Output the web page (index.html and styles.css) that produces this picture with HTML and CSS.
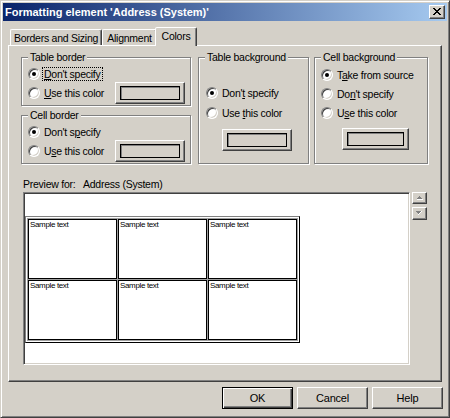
FILE: index.html
```html
<!DOCTYPE html>
<html>
<head>
<meta charset="utf-8">
<title>Formatting element</title>
<link rel="stylesheet" href="styles.css">
</head>
<body>
<div class="window">
  <div class="titlebar">
    <span class="title">Formatting element 'Address (System)'</span>
    <span class="close"><svg width="8" height="7" viewBox="0 0 8 7" shape-rendering="crispEdges"><path d="M0 0h2v1H0z M6 0h2v1H6z M1 1h2v1H1z M5 1h2v1H5z M2 2h4v1H2z M3 3h2v1H3z M2 4h4v1H2z M1 5h2v1H1z M5 5h2v1H5z M0 6h2v1H0z M6 6h2v1H6z" fill="#000"/></svg></span>
  </div>
  <div class="client">
    <div class="tabs">
      <div class="tab t1">Borders and Sizing</div>
      <div class="tab t2">Alignment</div>
      <div class="tab t3 sel">Colors</div>
    </div>
    <div class="panel">
      <div class="groups">
        <div class="stack">
          <div class="grp small">
            <div class="legend">Table border</div>
            <div class="opts">
              <div class="opt"><span class="radio on"></span><span class="focus"><u>D</u>on't specify</span></div>
              <div class="opt"><span class="radio"></span><span><u>U</u>se this color</span><span class="cbtn push"><span class="swatch"></span></span></div>
            </div>
          </div>
          <div class="grp small second">
            <div class="legend">Cell border</div>
            <div class="opts">
              <div class="opt"><span class="radio on"></span><span>Don't s<u>p</u>ecify</span></div>
              <div class="opt"><span class="radio"></span><span>U<u>s</u>e this color</span><span class="cbtn push"><span class="swatch"></span></span></div>
            </div>
          </div>
        </div>
        <div class="grp tall tbg">
          <div class="legend">Table background</div>
          <div class="opts">
            <div class="opt"><span class="radio on"></span><span>Don'<u>t</u> specify</span></div>
            <div class="opt"><span class="radio"></span><span>Use <u>t</u>his color</span></div>
            <span class="cbtn below"><span class="swatch"></span></span>
          </div>
        </div>
        <div class="grp tall cbg">
          <div class="legend">Cell background</div>
          <div class="opts">
            <div class="opt"><span class="radio on"></span><span>T<u>a</u>ke from source</span></div>
            <div class="opt"><span class="radio"></span><span>Do<u>n</u>'t specify</span></div>
            <div class="opt"><span class="radio"></span><span>U<u>s</u>e this color</span></div>
            <span class="cbtn below narrow"><span class="swatch"></span></span>
          </div>
        </div>
      </div>
      <div class="plabel"><span class="k">Preview for:</span><span>Address (System)</span></div>
      <div class="prow">
        <div class="preview">
          <div class="ptable">
            <div class="cell">Sample text</div>
            <div class="cell">Sample text</div>
            <div class="cell">Sample text</div>
            <div class="cell">Sample text</div>
            <div class="cell">Sample text</div>
            <div class="cell">Sample text</div>
          </div>
        </div>
        <div class="spin">
          <span class="sbtn up"><svg width="7" height="4" viewBox="0 0 7 4" shape-rendering="crispEdges"><path d="M3 0h1v1h1v1h1v1H1V2h1V1h1z" fill="#808080"/><path d="M1 3h6v1H1z" fill="#fff"/></svg></span>
          <span class="sbtn down"><svg width="7" height="4" viewBox="0 0 7 4" shape-rendering="crispEdges"><path d="M0 0h5v1H4v1H3v1H2V2H1V1H0z" fill="#808080"/><path d="M5 0h1v1H5zM4 1h1v1H4zM3 2h1v1H3zM2 3h1v1H2z" fill="#fff"/></svg></span>
        </div>
      </div>
    </div>
    <div class="btns">
      <span class="btn def">OK</span>
      <span class="btn">Cancel</span>
      <span class="btn">Help</span>
    </div>
  </div>
</div>
</body>
</html>
```
FILE: styles.css
```css
* { box-sizing: border-box; }
html, body { margin: 0; padding: 0; }
body {
  background: #d4d0c8;
  font-family: "Liberation Sans", Arial, sans-serif;
  font-size: 10.5px;
  letter-spacing: -0.25px;
  color: #000;
}
u { text-decoration: underline; text-underline-offset: 1px; }

.window {
  width: 450px;
  height: 418px;
  border: 1px solid;
  border-color: #d4d0c8 #404040 #404040 #d4d0c8;
  box-shadow: inset 1px 1px 0 #fff, inset -1px -1px 0 #808080;
  padding: 2px;
  display: flex;
  flex-direction: column;
}

.titlebar {
  height: 18px;
  flex: none;
  display: flex;
  align-items: center;
  justify-content: space-between;
  padding: 0 2px 0 2px;
  background: linear-gradient(90deg, #0a246a 0%, #a6caf0 100%);
}
.title {
  color: #fff;
  font-weight: bold;
  font-size: 11px;
  letter-spacing: 0;
  line-height: 13px;
}
.close {
  width: 16px;
  height: 14px;
  background: #d4d0c8;
  border: 1px solid;
  border-color: #fff #404040 #404040 #fff;
  box-shadow: inset -1px -1px 0 #808080;
  display: flex;
  align-items: center;
  justify-content: center;
  padding: 0 1px 1px 0;
}
.close svg { display: block; }

.client {
  flex: 1;
  padding: 6px 5px 0 5px;
  display: flex;
  flex-direction: column;
}

.tabs {
  height: 18px;
  display: flex;
  align-items: flex-end;
  padding-left: 2px;
}
.tab {
  height: 16px;
  border: 1px solid;
  border-bottom: 0;
  border-color: #fff #404040 transparent #fff;
  box-shadow: inset -1px 0 0 #808080;
  border-radius: 2px 2px 0 0;
  display: flex;
  align-items: center;
  justify-content: center;
  padding-top: 1px;
}
.t1 { width: 92px; }
.t2 { width: 55px; }
.t3 { width: 42px; }
.tab.sel {
  height: 19px;
  margin: 0 -2px -1px -2px;
  position: relative;
  z-index: 1;
  background: #d4d0c8;
  padding-top: 0;
  padding-bottom: 3px;
}

.panel {
  height: 337px;
  border: 1px solid;
  border-color: #fff #404040 #404040 #fff;
  box-shadow: inset -1px -1px 0 #808080;
  padding: 5px 12px 0 12px;
}

.groups { display: flex; align-items: flex-start; }
.stack { width: 170px; display: flex; flex-direction: column; }
.grp {
  margin-top: 6px;
  border: 1px solid #808080;
  box-shadow: inset 1px 1px 0 #fff, 1px 1px 0 #fff;
}
.grp.small { height: 49px; }
.grp.small.second { margin-top: 9px; }
.grp.tall { height: 107px; }
.tbg { width: 111px; margin-left: 7px; }
.cbg { width: 114px; margin-left: 5px; }

.legend {
  display: block;
  width: fit-content;
  height: 12px;
  line-height: 12px;
  margin: -7px 0 0 6px;
  padding: 0 2px;
  background: #d4d0c8;
  white-space: nowrap;
}

.opts { display: flex; flex-direction: column; }
.small .opts { padding: 2px 5px 0 6px; gap: 1px; }
.tbg .opts { padding: 21px 0 0 7px; gap: 2px; }
.cbg .opts { padding: 3px 0 0 6px; gap: 1px; }

.opt {
  display: flex;
  align-items: center;
  height: 18px;
  white-space: nowrap;
}
.radio {
  flex: none;
  width: 12px;
  height: 12px;
  margin-right: 4px;
  border-radius: 50%;
  background: #fff;
  border: 1px solid;
  border-color: #808080 #fff #fff #808080;
  box-shadow: inset 1px 1px 0 #404040, inset -1px -1px 0 #d4d0c8;
  display: flex;
  align-items: center;
  justify-content: center;
}
.radio.on::after {
  content: "";
  width: 4px;
  height: 4px;
  border-radius: 50%;
  background: #000;
}
.focus {
  display: inline-block;
  line-height: 12px;
  border: 1px dotted #000;
  padding: 0 1px;
  margin-left: -2px;
}

.cbtn {
  flex: none;
  width: 70px;
  height: 22px;
  border: 1px solid;
  border-color: #fff #404040 #404040 #fff;
  box-shadow: inset -1px -1px 0 #808080;
  display: flex;
  align-items: center;
  justify-content: center;
  padding: 0 1px 1px 0;
}
.cbtn.push { margin-left: auto; }
.cbtn.below { margin-top: 5px; }
.tbg .cbtn.below { margin-left: 16px; }
.cbg .cbtn.below { margin-left: 21px; }
.cbtn.narrow { width: 67px; }
.swatch {
  width: 60px;
  height: 14px;
  border: 1px solid #000;
  box-shadow: inset 1px 1px 0 #808080;
  background: #d4d0c8;
}
.narrow .swatch { width: 57px; }

.plabel {
  margin: 14px 0 2px 2px;
  height: 12px;
  line-height: 12px;
  white-space: nowrap;
}
.plabel .k { display: inline-block; width: 60px; }

.prow { display: flex; align-items: flex-start; margin-left: 2px; }
.preview {
  width: 387px;
  height: 173px;
  background: #fff;
  border: 1px solid;
  border-color: #808080 #fff #fff #808080;
  box-shadow: inset 1px 1px 0 #404040, inset -1px -1px 0 #d4d0c8;
  padding: 23px 0 0 1px;
}
.ptable {
  width: fit-content;
  display: grid;
  grid-template-columns: repeat(3, 89px);
  grid-template-rows: 60px 60px;
  gap: 1px;
  padding: 2px;
  border: 1px solid;
  border-color: #808080 #000 #000 #808080;
  background: #fff;
}
.cell {
  border: 1px solid #000;
  box-shadow: 0 0 0 1px #a0a0a0;
  font-size: 8px;
  letter-spacing: -0.35px;
  line-height: 10px;
  padding: 0 0 0 1px;
}

.spin { display: flex; flex-direction: column; gap: 3px; margin-left: 2px; }
.sbtn {
  width: 15px;
  border: 1px solid;
  border-color: #fff #404040 #404040 #fff;
  box-shadow: inset -1px -1px 0 #808080;
  display: flex;
  align-items: center;
  justify-content: center;
  padding: 0 1px 1px 0;
}
.sbtn.up { height: 12px; }
.sbtn.down { height: 13px; }
.sbtn svg { display: block; }

.btns {
  display: flex;
  justify-content: flex-end;
  gap: 4px;
  margin: 5px -1px 0 0;
}
.btn {
  width: 71px;
  height: 22px;
  border: 1px solid;
  border-color: #fff #404040 #404040 #fff;
  box-shadow: inset -1px -1px 0 #808080;
  display: flex;
  align-items: center;
  justify-content: center;
  font-size: 11px;
  letter-spacing: -0.2px;
}
.btn.def {
  border-color: #000;
  box-shadow: inset 1px 1px 0 #fff, inset -1px -1px 0 #404040, inset -2px -2px 0 #808080;
}
```
